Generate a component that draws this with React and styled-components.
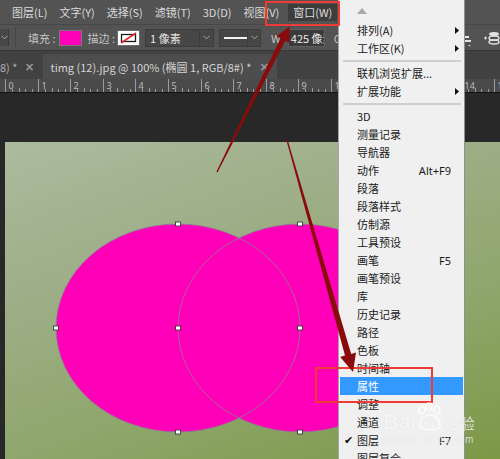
import React from 'react';
import styled, { createGlobalStyle } from 'styled-components';

const Global = createGlobalStyle`
  html, body { margin: 0; padding: 0; background: #282828; }
  body {
    width: 500px; height: 459px; overflow: hidden;
    font-family: "Noto Sans CJK SC", "Noto Sans", sans-serif;
  }
`;

const Screen = styled.div`
  position: relative;
  width: 500px;
  height: 459px;
  overflow: hidden;
  display: flex;
  flex-direction: column;
  background: #282828;
`;

/* ---------- top menu bar ---------- */
const MenuBar = styled.div`
  height: 25px;
  flex: none;
  box-sizing: border-box;
  background: #535353;
  border-bottom: 1px solid #474747;
  display: flex;
  align-items: center;
  gap: 12px;
  padding-left: 12px;
`;

const TopItem = styled.div`
  font-size: 11px;
  line-height: 17px;
  color: #dadada;
  white-space: nowrap;
  padding: ${(p) => (p.$active ? '0 5px' : '0')};
  margin-left: ${(p) => (p.$active ? '-3px' : '0')};
  background: ${(p) => (p.$active ? '#3d3d3d' : 'transparent')};
`;

/* ---------- options bar ---------- */
const OptionsBar = styled.div`
  height: 25px;
  flex: none;
  box-sizing: border-box;
  background: #535353;
  display: flex;
  align-items: center;
`;

const StubSelect = styled.div`
  width: 8px;
  height: 17px;
  background: #474747;
  border-right: 1px solid #3a3a3a;
  display: flex;
  align-items: center;
  justify-content: center;
`;

const VDivider = styled.div`
  width: 1px;
  height: 20px;
  background: #464646;
  margin-left: 6px;
`;

const OptLabel = styled.span`
  font-size: 11px;
  color: #c4c4c4;
  margin-left: ${(p) => p.$ml}px;
  white-space: nowrap;
`;

const FillSwatch = styled.div`
  width: 21px;
  height: 14px;
  margin-left: 3px;
  background: #ff00b8;
  border: 1px solid #7a7a7a;
`;

const StrokeSwatch = styled.div`
  width: 23px;
  height: 16px;
  margin-left: 2px;
  display: flex;
`;

const Select = styled.div`
  width: ${(p) => p.$w}px;
  height: 18px;
  margin-left: 5px;
  box-sizing: border-box;
  background: #464646;
  border: 1px solid #3c3c3c;
  display: flex;
  align-items: center;
  justify-content: space-between;
  padding-left: 4px;
`;

const SelectText = styled.span`
  font-size: 11px;
  color: #e6e6e6;
  white-space: nowrap;
`;

const Chevron = styled.div`
  width: 13px;
  height: 16px;
  border-left: 1px solid #3c3c3c;
  display: flex;
  align-items: center;
  justify-content: center;
`;

const LineSample = styled.div`
  width: 25px;
  height: 2px;
  background: #f2f2f2;
`;

const NumInput = styled.div`
  width: 37px;
  height: 18px;
  margin-left: 4px;
  box-sizing: border-box;
  background: #3a3a3a;
  border: 1px solid #5e5e5e;
  font-size: 11px;
  line-height: 16px;
  color: #ececec;
  padding-left: 2px;
  overflow: hidden;
  white-space: nowrap;
`;

const RightIcons = styled.div`
  margin-left: auto;
  display: flex;
  align-items: center;
  gap: 12px;
`;

/* ---------- tab bar ---------- */
const TabBar = styled.div`
  height: 29px;
  flex: none;
  box-sizing: border-box;
  background: #414141;
  border-top: 1px solid #383838;
  display: flex;
  align-items: flex-end;
`;

const Tab = styled.div`
  height: 25px;
  display: flex;
  align-items: center;
  gap: ${(p) => (p.$active ? '8px' : '7px')};
  padding: ${(p) => (p.$active ? '0 8px 0 8px' : '0 5px 0 0')};
  margin-left: ${(p) => (p.$active ? '3px' : '0')};
  background: ${(p) => (p.$active ? '#4d4d4d' : 'transparent')};
`;

const TabText = styled.span`
  font-size: 11px;
  color: ${(p) => (p.$active ? '#d4d4d4' : '#b0b0b0')};
  white-space: nowrap;
`;

const TabClose = styled.span`
  font-size: 12px;
  font-weight: bold;
  color: #9a9a9a;
  font-family: "DejaVu Sans", sans-serif;
`;

/* ---------- ruler ---------- */
const Ruler = styled.div`
  height: 14px;
  flex: none;
  box-sizing: border-box;
  background: #4a4a4a;
  border-bottom: 1px solid #141414;
  display: flex;
  overflow: hidden;
`;

/* ---------- workspace ---------- */
const Workspace = styled.div`
  flex: 1;
  display: flex;
  padding: 49px 0 0 5px;
  background: #282828;
  min-height: 0;
`;

const Canvas = styled.div`
  flex: 1;
  background: linear-gradient(160deg, #abbb9e 0%, #9faf8a 30%, #8fa66c 65%, #7c9846 100%);
  display: flex;
`;

/* ---------- dropdown menu (overlay) ---------- */
const Dropdown = styled.div`
  position: absolute;
  left: 338px;
  top: 0;
  width: 127px;
  height: 470px;
  box-sizing: border-box;
  background: #f0f0f0;
  border-left: 1px solid #a8a8a8;
  border-right: 1px solid #8f8f8f;
  display: flex;
  flex-direction: column;
  z-index: 5;
`;

const ScrollUp = styled.div`
  height: 21px;
  flex: none;
  display: flex;
  align-items: center;
  padding-left: 18px;
`;

const Item = styled.div`
  height: 18px;
  flex: none;
  margin: 0 1px;
  display: grid;
  grid-template-columns: 17px 1fr auto 12px;
  align-items: center;
  font-size: 11px;
  color: ${(p) => (p.$active ? '#ffffff' : '#1a1a1a')};
  background: ${(p) => (p.$active ? '#3399ff' : 'transparent')};
`;

const Check = styled.span`
  font-size: 11px;
  color: #111;
  text-align: center;
  font-family: "DejaVu Sans", sans-serif;
`;

const Label = styled.span`
  white-space: nowrap;
`;

const Shortcut = styled.span`
  white-space: nowrap;
  font-family: "Noto Sans", sans-serif;
  font-size: 11px;
`;

const SubArrow = styled.span`
  display: flex;
  justify-content: center;
`;

const Separator = styled.div`
  height: 7px;
  flex: none;
  display: flex;
  align-items: center;
  padding: 0 3px 0 4px;
  &::after {
    content: '';
    flex: 1;
    height: 2px;
    background: #cfcfcf;
  }
`;

/* ---------- overlays ---------- */
const RedBox = styled.div`
  position: absolute;
  left: ${(p) => p.$x}px;
  top: ${(p) => p.$y}px;
  width: ${(p) => p.$w}px;
  height: ${(p) => p.$h}px;
  box-sizing: border-box;
  border: 2px solid #ef3b36;
  z-index: 7;
`;

const ArrowLayer = styled.svg`
  position: absolute;
  left: 0;
  top: 0;
  z-index: 8;
  pointer-events: none;
`;

const Watermark = styled.div`
  position: absolute;
  left: 383px;
  top: 401px;
  z-index: 9;
  display: flex;
  flex-direction: column;
  align-items: flex-start;
  color: rgba(255, 255, 255, 0.75);
  text-shadow: 0 0 1px rgba(0, 0, 0, 0.12);
  pointer-events: none;
`;

const WmTop = styled.div`
  display: flex;
  align-items: flex-end;
  height: 32px;
`;

const WmBai = styled.span`
  font-family: "Liberation Sans", sans-serif;
  font-weight: bold;
  font-size: 22px;
  line-height: 22px;
  letter-spacing: -0.5px;
`;

const WmCn = styled.span`
  font-size: 15px;
  line-height: 20px;
  margin-left: 1px;
`;

const WmSite = styled.span`
  font-family: "Liberation Sans", sans-serif;
  font-size: 10px;
  margin-top: 1px;
  letter-spacing: 0.6px;
`;

const ChevronIcon = ({ color = '#a8a8a8' }) => (
  <svg width="7" height="5" viewBox="0 0 7 5">
    <polyline points="0.5,0.8 3.5,3.8 6.5,0.8" fill="none" stroke={color} strokeWidth="1" />
  </svg>
);

const TriRight = () => (
  <svg width="4" height="7" viewBox="0 0 4 7">
    <polygon points="0,0 4,3.5 0,7" fill="#111" />
  </svg>
);

const topMenus = ['图层(L)', '文字(Y)', '选择(S)', '滤镜(T)', '3D(D)', '视图(V)'];

const menuGroups = [
  [
    { label: '排列(A)', sub: true },
    { label: '工作区(K)', sub: true },
  ],
  [
    { label: '联机浏览扩展...' },
    { label: '扩展功能', sub: true },
  ],
  [
    { label: '3D' },
    { label: '测量记录' },
    { label: '导航器' },
    { label: '动作', key: 'Alt+F9' },
    { label: '段落' },
    { label: '段落样式' },
    { label: '仿制源' },
    { label: '工具预设' },
    { label: '画笔', key: 'F5' },
    { label: '画笔预设' },
    { label: '库' },
    { label: '历史记录' },
    { label: '路径' },
    { label: '色板' },
    { label: '时间轴' },
    { label: '属性', active: true },
    { label: '调整' },
    { label: '通道' },
    { label: '图层', key: 'F7', checked: true },
    { label: '图层复合' },
  ],
];

function RulerMarks() {
  const majors = Array.from({ length: 16 }, (_, i) => Math.round(5 + 32.6 * i) + 0.5);
  return (
    <svg width="500" height="13" viewBox="0 0 500 13">
      {majors.map((x, i) => (
        <g key={i}>
          <line x1={x} y1="0" x2={x} y2="13" stroke="#9c9c9c" strokeWidth="1" />
          <text x={x + 3} y="10" fontSize="9" fill="#bdbdbd" fontFamily="Noto Sans, sans-serif">
            {i}
          </text>
          {[1, 2, 3, 4].map((k) => {
            const mx = Math.round(x + k * 6.52) + 0.5;
            return (
              <line key={k} x1={mx} y1={k === 2 ? 9 : 10} x2={mx} y2="13" stroke="#9c9c9c" strokeWidth="1" />
            );
          })}
        </g>
      ))}
    </svg>
  );
}

function Shapes() {
  const handles = [
    [51, 186],
    [173, 186],
    [295, 186],
    [173, 82],
    [173, 290],
    [295, 82],
    [295, 290],
  ];
  return (
    <svg width="495" height="317" viewBox="0 0 495 317">
      <ellipse cx="173" cy="186" rx="122" ry="104" fill="#ff00b8" />
      <ellipse cx="295" cy="186" rx="122" ry="104" fill="#ff00b8" />
      <ellipse cx="173" cy="186" rx="122" ry="104" fill="none" stroke="#8a7f92" strokeWidth="0.8" />
      <ellipse cx="295" cy="186" rx="122" ry="104" fill="none" stroke="#8a7f92" strokeWidth="0.8" />
      {handles.map(([x, y], i) => (
        <rect key={i} x={x - 2.5} y={y - 2} width="5" height="4" fill="#ffffff" stroke="#2b2b2b" strokeWidth="0.8" />
      ))}
    </svg>
  );
}

function Arrows() {
  return (
    <ArrowLayer width="500" height="459" viewBox="0 0 500 459">
      <polygon
        points="217.6,172.3 285.2,40.8 289.2,42.8 289.5,26.5 276.4,36.2 280.6,38.2 216.4,171.7"
        fill="#8a0b0b"
      />
      <polygon
        points="287.6,139.8 351.2,353.9 356.0,352.5 353,372 340.2,356.9 345.0,355.5 286.4,140.2"
        fill="#8a0b0b"
      />
    </ArrowLayer>
  );
}

export default function App() {
  return (
    <>
      <Global />
      <Screen>
        <MenuBar>
          {topMenus.map((m) => (
            <TopItem key={m}>{m}</TopItem>
          ))}
          <TopItem $active>窗口(W)</TopItem>
        </MenuBar>

        <OptionsBar>
          <StubSelect>
            <ChevronIcon />
          </StubSelect>
          <VDivider />
          <OptLabel $ml={12}>填充 :</OptLabel>
          <FillSwatch />
          <OptLabel $ml={6}>描边 :</OptLabel>
          <StrokeSwatch>
            <svg width="23" height="16" viewBox="0 0 23 16">
              <rect x="0.5" y="0.5" width="22" height="15" fill="#ffffff" stroke="#6a6a6a" />
              <rect x="4.5" y="4.5" width="14" height="7" fill="none" stroke="#1a1a1a" strokeWidth="1.3" />
              <line x1="19" y1="3" x2="4" y2="13" stroke="#e2262b" strokeWidth="1.6" />
            </svg>
          </StrokeSwatch>
          <Select $w={69}>
            <SelectText>1 像素</SelectText>
            <Chevron>
              <ChevronIcon />
            </Chevron>
          </Select>
          <Select $w={42}>
            <LineSample />
            <Chevron>
              <ChevronIcon />
            </Chevron>
          </Select>
          <OptLabel $ml={10}>W:</OptLabel>
          <NumInput>425 像素</NumInput>
          <OptLabel $ml={9}>G</OptLabel>
          <RightIcons>
            <svg width="14" height="18" viewBox="0 0 14 18">
              <rect x="1" y="3" width="6" height="2" fill="#e4e4e4" />
              <rect x="1" y="7" width="10" height="2" fill="#e4e4e4" />
              <rect x="1" y="11" width="12" height="2" fill="#e4e4e4" />
              <polygon points="10,16 13,16 11.5,17.5" fill="#d0d0d0" />
            </svg>
            <svg width="16" height="18" viewBox="0 0 16 18">
              <path d="M0 9 h3 M1.5 7.5 v3" stroke="#e4e4e4" strokeWidth="1" />
              <ellipse cx="10" cy="5" rx="5" ry="2" fill="#e4e4e4" />
              <ellipse cx="10" cy="9" rx="5" ry="2" fill="none" stroke="#e4e4e4" strokeWidth="1.4" />
              <ellipse cx="10" cy="13" rx="5" ry="2" fill="none" stroke="#e4e4e4" strokeWidth="1.4" />
            </svg>
          </RightIcons>
        </OptionsBar>

        <TabBar>
          <Tab>
            <TabText>8) *</TabText>
            <TabClose>×</TabClose>
          </Tab>
          <Tab $active>
            <TabText $active>timg (12).jpg @ 100% (椭圆 1, RGB/8#) *</TabText>
            <TabClose>×</TabClose>
          </Tab>
        </TabBar>

        <Ruler>
          <RulerMarks />
        </Ruler>

        <Workspace>
          <Canvas>
            <Shapes />
          </Canvas>
        </Workspace>

        <Dropdown>
          <ScrollUp>
            <svg width="10" height="6" viewBox="0 0 10 6">
              <polygon points="0,6 5,0 10,6" fill="#a9a9a9" />
            </svg>
          </ScrollUp>
          {menuGroups.map((group, gi) => (
            <React.Fragment key={gi}>
              {gi > 0 && <Separator />}
              {group.map((it) => (
                <Item key={it.label} $active={it.active}>
                  <Check>{it.checked ? '✔' : ''}</Check>
                  <Label>{it.label}</Label>
                  <Shortcut>{it.key || ''}</Shortcut>
                  <SubArrow>{it.sub ? <TriRight /> : null}</SubArrow>
                </Item>
              ))}
            </React.Fragment>
          ))}
        </Dropdown>

        <RedBox $x={265} $y={1} $w={75} $h={25} />
        <RedBox $x={315} $y={367} $w={118} $h={36} />

        <Arrows />

        <Watermark>
          <WmTop>
            <WmBai>Bai</WmBai>
            <svg width="28" height="31" viewBox="0 0 28 31">
              <g fill="none" stroke="rgba(255,255,255,0.8)" strokeWidth="1.6">
                <ellipse cx="6" cy="8" rx="3" ry="4" />
                <ellipse cx="13" cy="4.5" rx="3" ry="3.5" />
                <ellipse cx="21" cy="8" rx="3" ry="4" />
                <path d="M4 24 C4 16 9 13 14 13 C19 13 24 16 24 24 C24 29 4 29 4 24 Z" />
              </g>
              <text x="7" y="26" fontSize="9" fontWeight="bold" fill="rgba(255,255,255,0.8)" fontFamily="Liberation Sans, sans-serif">du</text>
            </svg>
            <WmCn>经验</WmCn>
          </WmTop>
          <WmSite>jingyan.baidu.com</WmSite>
        </Watermark>
      </Screen>
    </>
  );
}
